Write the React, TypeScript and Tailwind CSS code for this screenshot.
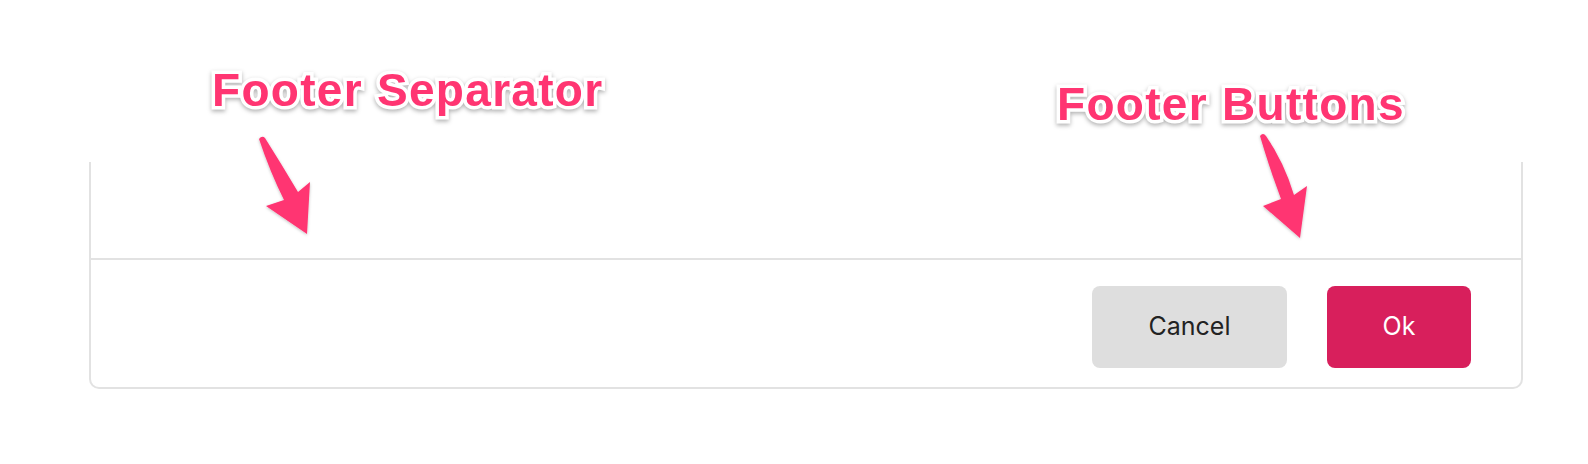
import React from 'react';

const labelClass =
  "absolute whitespace-nowrap font-['Liberation_Sans',Arial,sans-serif] font-bold text-[46px] leading-none tracking-[1.3px] text-[#ff3572] [-webkit-text-stroke:7px_white] [paint-order:stroke_fill] drop-shadow-[0_2px_2px_rgba(0,0,0,0.3)]";

const Annotations: React.FC = () => (
  <>
    <div className={labelClass + ' left-[212px] top-[67px]'}>Footer Separator</div>
    <div className={labelClass + ' left-[1057px] top-[81px]'}>Footer Buttons</div>
    <svg className="absolute inset-0 pointer-events-none" width="1588" height="464" viewBox="0 0 1588 464">
      <defs>
        <filter id="arrow-shadow" x="-50%" y="-50%" width="200%" height="200%">
          <feDropShadow dx="0" dy="1" stdDeviation="1.5" floodColor="#000" floodOpacity="0.25" />
        </filter>
      </defs>
      <g fill="#ff3572" filter="url(#arrow-shadow)">
        <path d="M259 139 Q262 135 265 138 Q282 165 298 192 L310 182 L307 234 L266 206 L284 200 Q270 172 259 139 Z" />
        <path d="M1260 136 Q1263 132 1266 136 Q1284 162 1294 195 L1307 186 L1300 238 L1263 206 L1281 199 Q1270 170 1260 136 Z" />
      </g>
    </svg>
  </>
);

const App: React.FC = () => {
  return (
    <div className="relative w-[1588px] h-[464px] bg-white overflow-hidden font-['Inter','Liberation_Sans',sans-serif]">
      <div className="pt-[162px] pl-[89px]">
        <div className="w-[1434px] border-x-2 border-b-2 border-[#e2e2e2] rounded-b-[10px] bg-white">
          <div className="h-[96px]" />
          <div className="border-t-2 border-[#e2e2e2] flex justify-end gap-[40px] pt-[26px] pb-[19px] pr-[50px]">
            <button className="w-[195px] h-[82px] rounded-[8px] bg-[#dedede] text-[#222222] text-[25px]">
              Cancel
            </button>
            <button className="w-[144px] h-[82px] rounded-[8px] bg-[#d81f5c] text-white text-[25px]">
              Ok
            </button>
          </div>
        </div>
      </div>
      <Annotations />
    </div>
  );
};

export default App;
